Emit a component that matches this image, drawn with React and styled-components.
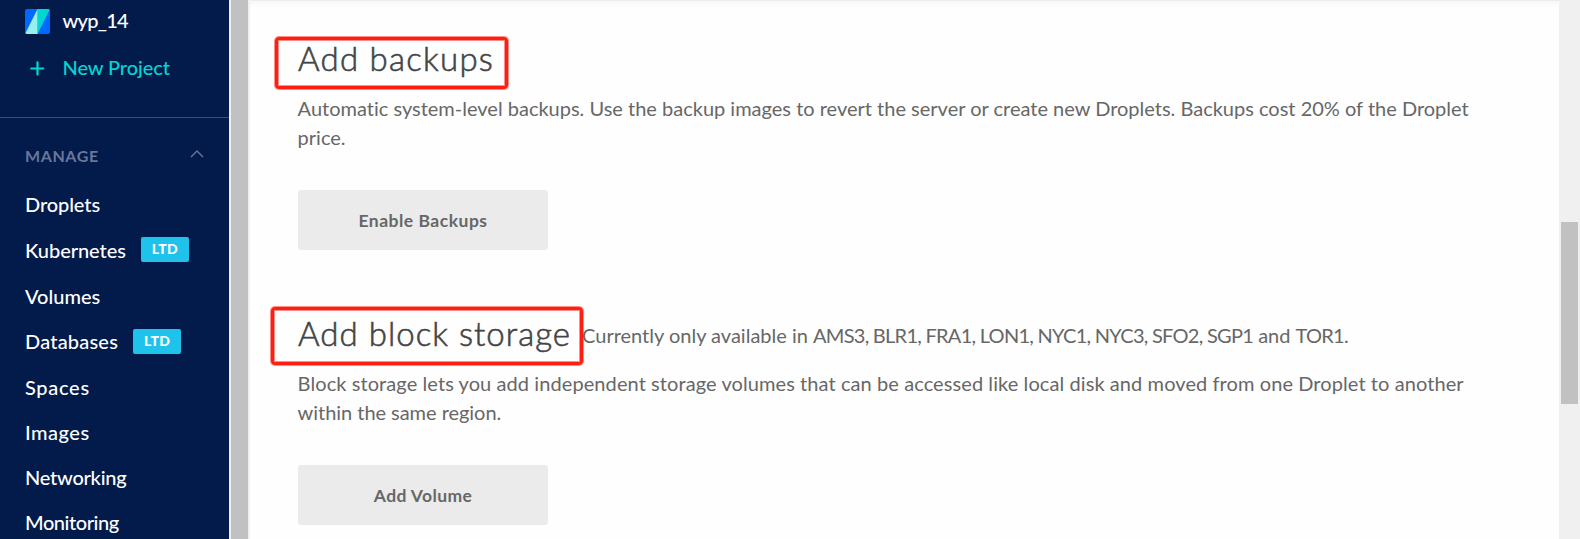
import React from "react";
import styled, { createGlobalStyle } from "styled-components";

const GlobalStyle = createGlobalStyle`
  *, *::before, *::after { box-sizing: border-box; }
  body {
    margin: 0;
    overflow: hidden;
    background: #fff;
    font-family: Lato, "Open Sans", sans-serif;
    font-variant-ligatures: none;
  }
  h2, p, ul { margin: 0; padding: 0; }
`;

const Page = styled.div`
  display: flex;
  width: 1580px;
  height: 539px;
  overflow: hidden;
`;

const Sidebar = styled.aside`
  flex: none;
  width: 229px;
  height: 539px;
  overflow: hidden;
  background: #031b4b;
  color: #fff;
  font-size: 20px;
  font-weight: 500;
`;

const Projects = styled.div`
  display: flex;
  flex-direction: column;
  height: 118px;
  border-bottom: 1px solid #3b4d74;
`;

const ProjectRow = styled.div`
  display: flex;
  align-items: center;
  height: ${(p) => (p.$first ? 43 : 50)}px;
  padding-left: 25px;
  color: ${(p) => p.$color || "#fff"};

  svg {
    flex: none;
    margin-right: 12.5px;
  }

  span {
    padding-bottom: ${(p) => (p.$first ? 3 : 2)}px;
  }
`;

const Label = styled.span`
  white-space: nowrap;
  letter-spacing: ${(p) => p.$spacing || 0}px;
`;

const GroupHeader = styled.div`
  display: flex;
  align-items: center;
  justify-content: space-between;
  height: 63.6px;
  padding: 11px 25px 0;
  color: #69779a;
  font-size: 16px;
  font-weight: 700;

  svg {
    margin-top: -2px;
  }
`;

const NavList = styled.ul`
  list-style: none;
`;

const NavItem = styled.li`
  display: flex;
  align-items: center;
  height: ${(p) => (p.$tall ? 46.6 : 45)}px;
  padding-left: 25px;
`;

const Badge = styled.span`
  width: 48px;
  height: 25px;
  margin-left: 15px;
  border-radius: 2px;
  background: #1fc2eb;
  font-size: 14px;
  font-weight: 900;
  line-height: 24px;
  letter-spacing: 0.3px;
  text-align: center;
`;

const ScrollTrack = styled.div`
  flex: none;
  display: flex;
  width: 21px;
  height: 539px;
  padding: ${(p) => p.$top || 0}px 2px 0;
  background: #f0f0f0;
`;

const ScrollThumb = styled.div`
  width: 17px;
  height: ${(p) => p.$height}px;
  background: #c1c1c1;
`;

const Main = styled.main`
  flex: 1;
  min-width: 0;
  height: 539px;
  padding: 37px 48px 0;
  border-top: 1px solid #ededed;
  background: linear-gradient(#f7f7f7, #fefefe 7px, #fefefe);
  color: #676767;
  font-size: 20px;
`;

const Section = styled.section`
  height: 212px;
  margin-bottom: 63px;
`;

const TitleRow = styled.div`
  display: flex;
  height: 40px;
`;

const Title = styled.h2`
  position: relative;
  color: #444;
  font-size: 33px;
  font-weight: 300;
  line-height: 40px;
  letter-spacing: ${(p) => p.$spacing}px;
  white-space: nowrap;
  -webkit-text-stroke: 0.6px #444;
`;

const Outline = styled.span`
  position: absolute;
  left: ${(p) => p.$left}px;
  top: ${(p) => p.$top}px;
  width: ${(p) => p.$width}px;
  height: ${(p) => p.$height}px;
  border: 3px solid #ff1e12;
  border-radius: 4px;
  box-shadow: 0 0 0 1px rgba(255, 30, 18, 0.5), inset 0 0 0 1px rgba(255, 30, 18, 0.5);
`;

const Note = styled.span`
  margin-left: 11px;
  line-height: 44px;
  white-space: nowrap;
`;

const Regions = styled.span`
  letter-spacing: -0.73px;
`;

const Description = styled.p`
  margin: 16px 0 38px -0.4px;
  line-height: 29px;
`;

const Line = styled.span`
  display: block;
  white-space: nowrap;
  letter-spacing: ${(p) => p.$spacing || 0}px;
`;

const Button = styled.button`
  display: block;
  width: 250px;
  height: 60px;
  padding: 0;
  border: 0;
  border-radius: 3px;
  background: #ebebeb;
  color: #676767;
  font: 700 17.5px Lato, "Open Sans", sans-serif;
  letter-spacing: ${(p) => p.$spacing}px;
`;

const ProjectIcon = () => (
  <svg width="25" height="25" viewBox="0 0 25 25">
    <defs>
      <clipPath id="tile"><rect width="25" height="25" rx="2" /></clipPath>
    </defs>
    <g clipPath="url(#tile)">
      <rect width="25" height="25" fill="#0069ff" />
      <path d="M12.5 0H25L12.5 25Z" fill="#00d7d2" />
      <path d="M12.5 0V25H0Z" fill="#99efed" />
    </g>
  </svg>
);

const PlusIcon = () => (
  <svg width="25" height="25" viewBox="0 0 25 25">
    <path d="M6.2 12.5H18.3M12.5 6.4V18.6" stroke="#00d7d2" strokeWidth="2.2" strokeLinecap="round" />
  </svg>
);

const ChevronUp = () => (
  <svg width="14" height="8" viewBox="0 0 14 8">
    <path d="M1 7L7 1L13 7" fill="none" stroke="#69779a" strokeWidth="1.4" />
  </svg>
);

const navItems = [
  { name: "Droplets", spacing: -0.1 },
  { name: "Kubernetes", badge: "LTD", spacing: -0.05 },
  { name: "Volumes" },
  { name: "Databases", badge: "LTD", spacing: 0.2 },
  { name: "Spaces", spacing: 0.7 },
  { name: "Images", spacing: 0.5 },
  { name: "Networking", spacing: -0.25 },
  { name: "Monitoring", spacing: -0.45 },
];

export default function App() {
  return (
    <Page>
      <GlobalStyle />
      <Sidebar>
        <Projects>
          <ProjectRow $first>
            <ProjectIcon />
            <Label $spacing={-0.75}>wyp_14</Label>
          </ProjectRow>
          <ProjectRow $color="#00d7d2">
            <PlusIcon />
            <Label $spacing={-0.1}>New Project</Label>
          </ProjectRow>
        </Projects>
        <GroupHeader>
          <Label $spacing={0.6}>MANAGE</Label>
          <ChevronUp />
        </GroupHeader>
        <NavList>
          {navItems.map(({ name, badge, spacing }) => (
            <NavItem key={name} $tall={Boolean(badge)}>
              <Label $spacing={spacing}>{name}</Label>
              {badge && <Badge>{badge}</Badge>}
            </NavItem>
          ))}
        </NavList>
      </Sidebar>
      <ScrollTrack>
        <ScrollThumb $height={539} />
      </ScrollTrack>
      <Main>
        <Section>
          <TitleRow>
            <Title $spacing={1.25}>
              Add backups
              <Outline $left={-23} $top={-1} $width={233} $height={52} />
            </Title>
          </TitleRow>
          <Description>
            <Line>
              Automatic system-level backups. Use the backup images to revert the server or create new
              Droplets. Backups cost 20% of the Droplet
            </Line>
            <Line>price.</Line>
          </Description>
          <Button $spacing={0.5}>Enable Backups</Button>
        </Section>
        <Section>
          <TitleRow>
            <Title $spacing={1.03}>
              Add block storage
              <Outline $left={-27} $top={-6} $width={312} $height={58} />
            </Title>
            <Note>
              Currently only available in{" "}
              <Regions>AMS3, BLR1, FRA1, LON1, NYC1, NYC3, SFO2, SGP1</Regions> and{" "}
              <Regions>TOR1.</Regions>
            </Note>
          </TitleRow>
          <Description>
            <Line $spacing={0.084}>
              Block storage lets you add independent storage volumes that can be accessed like local disk
              and moved from one Droplet to another
            </Line>
            <Line $spacing={-0.04}>within the same region.</Line>
          </Description>
          <Button $spacing={0.4}>Add Volume</Button>
        </Section>
      </Main>
      <ScrollTrack $top={222}>
        <ScrollThumb $height={182} />
      </ScrollTrack>
    </Page>
  );
}
